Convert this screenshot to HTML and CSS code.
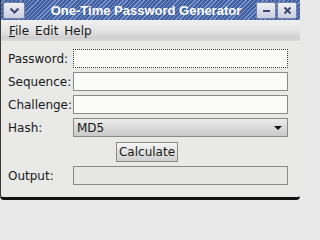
FILE: index.html
```html
<!DOCTYPE html>
<html>
<head>
<meta charset="utf-8">
<link rel="stylesheet" href="styles.css">
</head>
<body>
<div class="window">
  <div class="titlebar">
    <div class="tbtn tbtn-menu">
      <svg width="11" height="7" viewBox="0 0 11 7"><path d="M1.5 1.5 L5.5 5.5 L9.5 1.5" fill="none" stroke="#3c4670" stroke-width="2"/></svg>
    </div>
    <div class="title">One-Time Password Generator</div>
    <div class="tbtn">
      <svg width="9" height="9" viewBox="0 0 9 9"><rect x="1" y="4" width="7" height="2" fill="#3c4670"/></svg>
    </div>
    <div class="tbtn">
      <svg width="9" height="9" viewBox="0 0 9 9"><path d="M1.5 1.5 L7.5 7.5 M7.5 1.5 L1.5 7.5" stroke="#3c4670" stroke-width="2"/></svg>
    </div>
  </div>
  <div class="menubar">
    <span class="menu"><u>F</u>ile</span>
    <span class="menu">Edit</span>
    <span class="menu">Help</span>
  </div>
  <div class="form">
    <label class="lbl">Password:</label>
    <div class="field field-focus"></div>
    <label class="lbl">Sequence:</label>
    <div class="field"></div>
    <label class="lbl">Challenge:</label>
    <div class="field"></div>
    <label class="lbl">Hash:</label>
    <div class="select"><span>MD5</span><span class="arrow"></span></div>
    <div class="btnrow"><div class="button">Calculate</div></div>
    <label class="lbl">Output:</label>
    <div class="field field-out"></div>
  </div>
</div>
</body>
</html>
```
FILE: styles.css
```css
html, body {
  margin: 0;
  padding: 0;
  background: #e9e9e9;
}
.window {
  width: 300px;
  height: 200px;
  box-sizing: border-box;
  display: flex;
  flex-direction: column;
  background: #e9e9e8;
  border-left: 1px solid #3a3a3a;
  border-bottom: 3px solid #111;
  border-radius: 0 0 4px 4px;
  overflow: hidden;
  font-family: "DejaVu Sans", sans-serif;
  font-size: 12px;
  color: #1a1a1a;
}
.titlebar {
  height: 20px;
  flex: none;
  display: flex;
  align-items: center;
  padding: 0 3px 0 2px;
  box-sizing: border-box;
  background: repeating-linear-gradient(135deg, #42609f 0px, #42609f 2px, #7d97cf 2px, #7d97cf 3px);
}
.tbtn {
  width: 20px;
  height: 17px;
  box-sizing: border-box;
  border: 1px solid #7482a8;
  border-radius: 2px;
  background: linear-gradient(#eef0f6, #c9cfe0);
  display: flex;
  align-items: center;
  justify-content: center;
  margin-left: 1px;
}
.tbtn-menu {
  width: 22px;
  margin-left: 0;
}
.title {
  flex: 1;
  text-align: center;
  font-family: "Liberation Sans", sans-serif;
  font-weight: bold;
  font-size: 13px;
  color: #fff;
  padding-left: 12px;
  white-space: nowrap;
}
.menubar {
  height: 21px;
  flex: none;
  display: flex;
  align-items: center;
  padding-left: 5px;
  box-sizing: border-box;
  background: linear-gradient(#f0f0f0 0%, #e4e4e4 50%, #cfcfcf 85%, #dcdcdc 100%);
  font-size: 12px;
}
.menu {
  padding: 0 3px;
}
.form {
  display: grid;
  grid-template-columns: 65px 1fr;
  grid-template-rows: 19px 19px 19px 19px 21px 19px;
  row-gap: 4px;
  padding: 8px 12px 0 7px;
  align-items: center;
}
.lbl {
  white-space: nowrap;
}
.field {
  height: 19px;
  box-sizing: border-box;
  border: 1px solid #8a8a8a;
  background: #fbfbf9;
}
.field-focus {
  border: 1px dotted #3a3a3a;
}
.field-out {
  background: #e6e6e5;
}
.select {
  height: 19px;
  box-sizing: border-box;
  border: 1px solid #8a8a8a;
  background: linear-gradient(#ececec, #c9c9c9);
  display: flex;
  align-items: center;
  justify-content: space-between;
  padding: 0 5px 0 3px;
}
.arrow {
  width: 0;
  height: 0;
  border-left: 4px solid transparent;
  border-right: 4px solid transparent;
  border-top: 4px solid #111;
}
.btnrow {
  grid-column: 1 / 3;
  height: 21px;
  display: flex;
  align-items: flex-end;
  justify-content: center;
  padding-right: 2px;
}
.button {
  width: 62px;
  height: 20px;
  box-sizing: border-box;
  border: 1px solid #8a8a8a;
  background: linear-gradient(#f4f4f4, #cfcfcf);
  display: flex;
  align-items: center;
  justify-content: center;
}
```
